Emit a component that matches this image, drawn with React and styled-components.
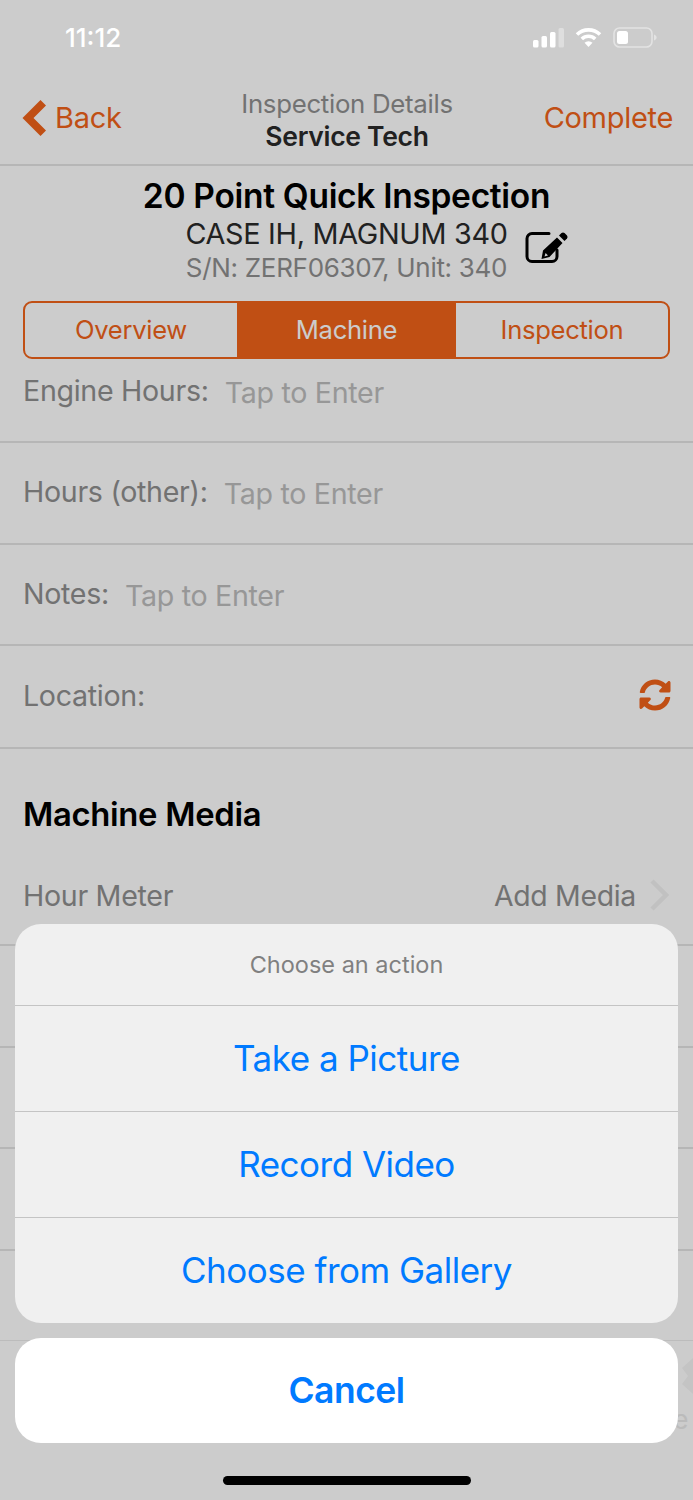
import styled, { createGlobalStyle } from 'styled-components';
import { FaSyncAlt } from 'react-icons/fa';

const GlobalStyle = createGlobalStyle`
  html, body { margin: 0; padding: 0; background: #fff; }
  body { font-family: Inter, "Liberation Sans", sans-serif; }
`;

const orange = '#f1631a';

const Screen = styled.div`
  position: relative;
  width: 693px;
  height: 1500px;
  overflow: hidden;
  background: #fff;
  letter-spacing: -0.3px;
`;

const StatusBar = styled.div`
  position: absolute;
  z-index: 3;
  top: 0;
  left: 0;
  right: 0;
  height: 75px;
  display: flex;
  align-items: center;
  justify-content: space-between;
  padding: 0 36px 0 65px;
  box-sizing: border-box;
  color: #fff;
`;

const Clock = styled.span`
  font-size: 26px;
  font-weight: 500;
  letter-spacing: 0;
`;

const StatusIcons = styled.div`
  display: flex;
  align-items: center;
  gap: 11px;
`;

const NavBar = styled.header`
  display: grid;
  grid-template-columns: 1fr auto 1fr;
  align-items: center;
  height: 166px;
  padding: 75px 20px 0 21px;
  box-sizing: border-box;
  border-bottom: 2px solid #e4e4e4;
`;

const BackLink = styled.a`
  display: flex;
  align-items: center;
  gap: 8px;
  margin-bottom: 4px;
  color: ${orange};
  font-size: 29px;
`;

const NavTitle = styled.div`
  text-align: center;
  font-size: 25.8px;
  line-height: 32px;
  color: #8f8f8f;
`;

const NavSubtitle = styled.div`
  font-size: 26.5px;
  font-weight: 600;
  color: #2a2a2a;
`;

const CompleteLink = styled.a`
  justify-self: end;
  margin-bottom: 4px;
  color: ${orange};
  font-size: 29px;
`;

const Summary = styled.section`
  position: relative;
  text-align: center;
  padding-top: 10px;
`;

const SummaryTitle = styled.h1`
  margin: 0;
  font-size: 33.5px;
  line-height: 40px;
  font-weight: 600;
  color: #000;
`;

const SummaryLine = styled.div`
  font-size: 28.8px;
  line-height: 36px;
  color: #2a2a2a;
`;

const SummarySerial = styled.div`
  font-size: 26px;
  line-height: 32px;
  color: #8f8f8f;
`;

const EditButton = styled.span`
  position: absolute;
  top: 65px;
  left: 525px;
  line-height: 0;
`;

const Tabs = styled.div`
  display: grid;
  grid-template-columns: 212px 219px 1fr;
  height: 58px;
  margin: 17px 23px 0;
  box-sizing: border-box;
  border: 2px solid ${orange};
  border-radius: 9px;
  overflow: hidden;
`;

const Tab = styled.div`
  display: flex;
  align-items: center;
  justify-content: center;
  padding-bottom: 2px;
  font-size: 25.6px;
  color: ${(p) => (p.$active ? '#fff' : orange)};
  background: ${(p) => (p.$active ? orange : 'transparent')};
`;

const Row = styled.div`
  display: flex;
  align-items: center;
  gap: 16px;
  height: ${(p) => p.$height || 102}px;
  padding: 0 22px ${(p) => p.$lift ?? 3}px 23px;
  box-sizing: border-box;
  border-bottom: 2px solid #e4e4e4;
  font-size: 28.6px;
  color: #8f8f8f;
`;

const Placeholder = styled.span`
  margin-top: 4px;
  color: #bdbdbd;
`;

const RowEnd = styled.span`
  margin-left: auto;
  display: flex;
  align-items: center;
  gap: 11px;
  color: ${(p) => p.$color || 'inherit'};
`;

const RowEndLabel = styled.span`
  font-size: 28.4px;
`;

const SectionTitle = styled.h2`
  margin: 0;
  padding: 43px 23px 0;
  height: 100px;
  box-sizing: border-box;
  font-size: 32.8px;
  line-height: 44px;
  font-weight: 600;
  color: #000;
`;

const BottomBar = styled.div`
  position: absolute;
  left: 0;
  right: 0;
  top: 1340px;
  border-top: 1px solid #ececec;
  height: 160px;
  box-sizing: border-box;
`;

const BarPeek = styled.div`
  position: absolute;
  right: 0;
  top: 17px;
  color: #f6f6f6;
  line-height: 0;
`;

const BarLabel = styled.span`
  position: absolute;
  right: 5px;
  top: 66px;
  font-size: 26px;
  line-height: 26px;
  color: #eaeaea;
`;

const Scrim = styled.div`
  position: absolute;
  z-index: 1;
  inset: 0;
  background: rgba(0, 0, 0, 0.2);
`;

const Sheet = styled.div`
  position: absolute;
  z-index: 2;
  left: 15px;
  right: 15px;
  top: 924px;
  display: flex;
  flex-direction: column;
  gap: 15px;
`;

const ActionGroup = styled.div`
  background: #f0f0f0;
  border-radius: 26px;
  overflow: hidden;
`;

const ActionTitle = styled.div`
  height: 81px;
  display: flex;
  align-items: center;
  justify-content: center;
  font-size: 23.5px;
  letter-spacing: 0;
  color: #808080;
`;

const Action = styled.button`
  display: flex;
  align-items: center;
  justify-content: center;
  width: 100%;
  height: 106px;
  padding: 0 0 2px;
  border: none;
  border-top: 1px solid #c4c4c4;
  background: transparent;
  font: inherit;
  font-size: 35px;
  letter-spacing: -0.5px;
  color: #007aff;
`;

const CancelButton = styled.button`
  height: 105px;
  border: none;
  border-radius: 26px;
  background: #fff;
  font: inherit;
  font-size: 35.5px;
  font-weight: 600;
  letter-spacing: -0.5px;
  color: #007aff;
`;

const HomeIndicator = styled.div`
  position: absolute;
  z-index: 3;
  left: 223px;
  top: 1476px;
  width: 248px;
  height: 9px;
  border-radius: 5px;
  background: #000;
`;

const SignalIcon = () => (
  <svg width="31" height="20" viewBox="0 0 31 20" fill="#fff">
    <rect x="0" y="12" width="5.5" height="7.5" rx="1.5" />
    <rect x="8.5" y="8" width="5.5" height="11.5" rx="1.5" />
    <rect x="17" y="4" width="5.5" height="15.5" rx="1.5" />
    <rect x="25.5" y="0" width="5.5" height="19.5" rx="1.5" opacity="0.35" />
  </svg>
);

const WifiIcon = () => (
  <svg width="27" height="21" viewBox="0 0 27 21" fill="none" stroke="#fff" strokeWidth="3.6">
    <path d="M2 7.5a16.5 16.5 0 0 1 23 0" />
    <path d="M6.8 12a9.6 9.6 0 0 1 13.4 0" />
    <path d="M13.5 20l-4-4.2a5.8 5.8 0 0 1 8 0z" fill="#fff" stroke="none" />
  </svg>
);

const BatteryIcon = () => (
  <svg width="44" height="22" viewBox="0 0 44 22" fill="none">
    <rect x="1" y="1" width="38" height="19" rx="5.5" stroke="#fff" strokeOpacity="0.45" strokeWidth="1.6" />
    <rect x="4" y="4" width="11" height="13" rx="2.5" fill="#fff" />
    <path d="M41 7.5c1.6.5 2.6 1.6 2.6 3s-1 2.5-2.6 3z" fill="#fff" fillOpacity="0.45" />
  </svg>
);

const BackChevron = () => (
  <svg width="26" height="38" viewBox="0 0 26 38" fill={orange}>
    <path d="M19.5 1 L25 6.5 L12.5 19 L25 31.5 L19.5 37 L1.5 19 Z" />
  </svg>
);

const RowChevron = () => (
  <svg width="24" height="32" viewBox="0 0 24 32" fill="none" stroke="#f2f2f2" strokeWidth="4.5">
    <path d="M5 2l14 14L5 30" />
  </svg>
);

const EditIcon = () => (
  <svg width="44" height="34" viewBox="0 0 44 34" fill="none">
    <path
      d="M24 2.5H7a5 5 0 0 0-5 5v18a5 5 0 0 0 5 5h20a5 5 0 0 0 5-5V19"
      stroke="#000"
      strokeWidth="3"
      strokeLinecap="round"
    />
    <path
      fillRule="evenodd"
      fill="#000"
      d="M16.5 28 L18 19.5 L32 6.5 L37.5 12 L24.5 26 Z M19.5 25.5 L23 24.6 L20.6 22 Z"
    />
    <path fill="#000" d="M34 4.5 L36.5 2 Q38 .8 39.5 2 L42 4.5 Q43.2 6 42 7.5 L39.5 10 Z" />
  </svg>
);

const formRows = [
  { label: 'Engine Hours:', height: 84, lift: 20 },
  { label: 'Hours (other):' },
  { label: 'Notes:', height: 101 },
];

const App = () => (
  <Screen>
    <GlobalStyle />
    <StatusBar>
      <Clock>11:12</Clock>
      <StatusIcons>
        <SignalIcon />
        <WifiIcon />
        <BatteryIcon />
      </StatusIcons>
    </StatusBar>

    <NavBar>
      <BackLink>
        <BackChevron />
        Back
      </BackLink>
      <NavTitle>
        Inspection Details
        <NavSubtitle>Service Tech</NavSubtitle>
      </NavTitle>
      <CompleteLink>Complete</CompleteLink>
    </NavBar>

    <Summary>
      <SummaryTitle>20 Point Quick Inspection</SummaryTitle>
      <SummaryLine>CASE IH, MAGNUM 340</SummaryLine>
      <SummarySerial>S/N: ZERF06307, Unit: 340</SummarySerial>
      <EditButton>
        <EditIcon />
      </EditButton>
    </Summary>

    <Tabs>
      <Tab>Overview</Tab>
      <Tab $active>Machine</Tab>
      <Tab>Inspection</Tab>
    </Tabs>

    {formRows.map((row) => (
      <Row key={row.label} $height={row.height} $lift={row.lift}>
        {row.label}
        <Placeholder>Tap to Enter</Placeholder>
      </Row>
    ))}
    <Row $height={103}>
      Location:
      <RowEnd $color={orange}>
        <FaSyncAlt size={32} />
      </RowEnd>
    </Row>

    <SectionTitle>Machine Media</SectionTitle>

    <Row $height={97}>
      Hour Meter
      <RowEnd>
        <RowEndLabel>Add Media</RowEndLabel>
        <RowChevron />
      </RowEnd>
    </Row>
    <Row />
    <Row $height={101} />
    <Row />

    <BottomBar>
      <BarPeek>
        <svg width="12" height="36" viewBox="0 0 12 36" fill="currentColor">
          <path d="M12 0L1 10l6 8-6 8 11 10z" />
        </svg>
      </BarPeek>
      <BarLabel>e</BarLabel>
    </BottomBar>

    <Scrim />

    <Sheet>
      <ActionGroup>
        <ActionTitle>Choose an action</ActionTitle>
        <Action>Take a Picture</Action>
        <Action>Record Video</Action>
        <Action>Choose from Gallery</Action>
      </ActionGroup>
      <CancelButton>Cancel</CancelButton>
    </Sheet>

    <HomeIndicator />
  </Screen>
);

export default App;
